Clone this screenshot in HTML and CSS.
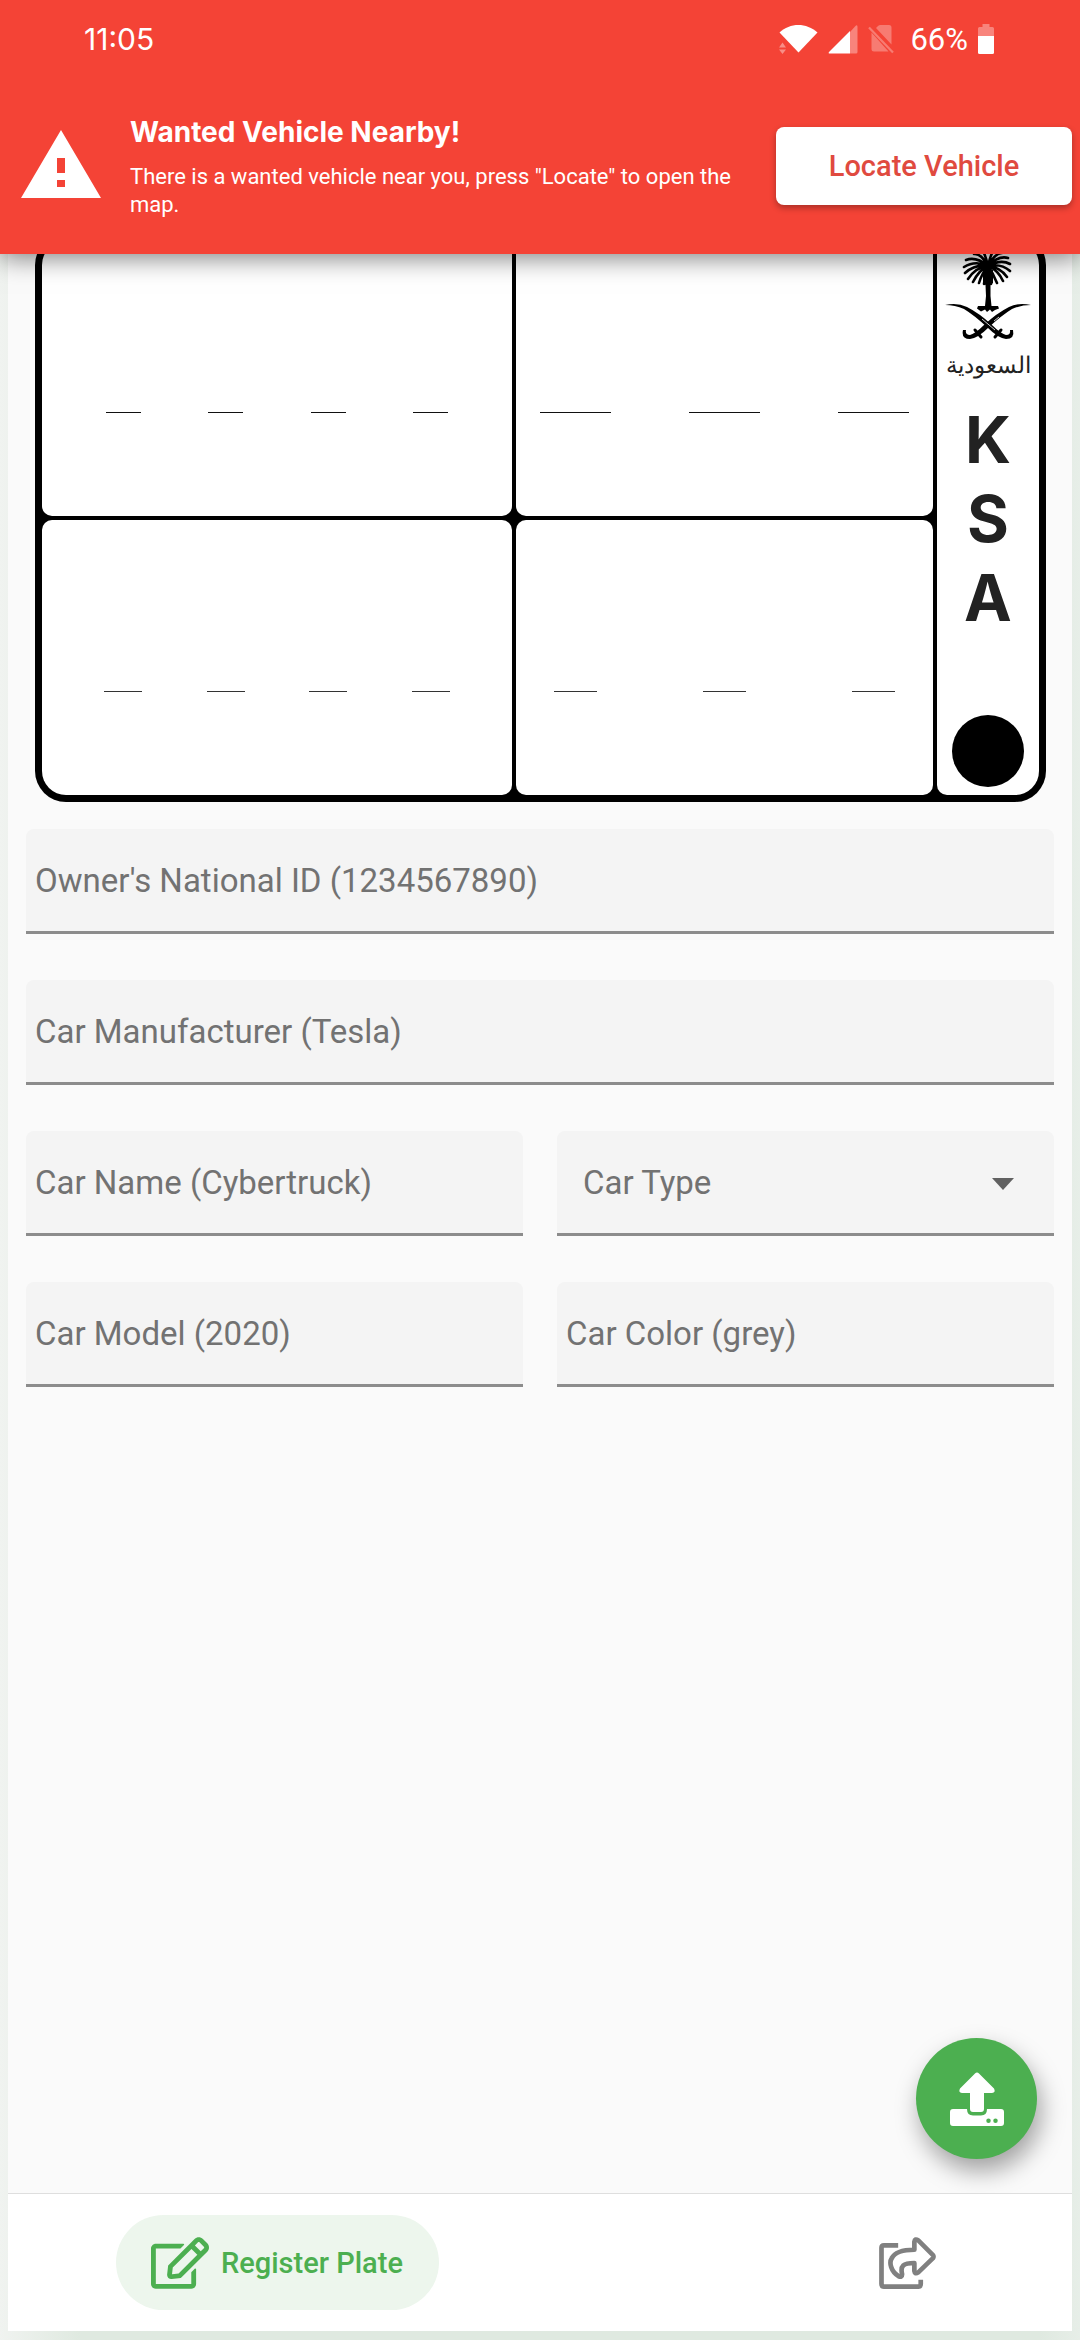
FILE: index.html
```html
<!DOCTYPE html>
<html lang="en">
<head>
<meta charset="utf-8">
<meta name="viewport" content="width=device-width, initial-scale=1">
<title>Register Plate</title>
<link rel="stylesheet" href="styles.css">
</head>
<body class="app">
  <header class="banner">
    <div class="status">
      <span class="status-time">11:05</span>
      <div class="status-icons">
        <svg class="icon-wifi" viewBox="0 0 40 30" aria-hidden="true"><path fill="#fff" d="M1.500 8.500C12-1.500 28.500-1.500 39.500 8.500L20.500 28.500Z"/><path fill="#fff" fill-opacity=".4" d="M1 23.500L4.500 18.500 8 23.500ZM1 25.500H8L4.500 30Z"/></svg>
        <svg class="icon-signal" viewBox="0 0 30 30" aria-hidden="true"><path fill="#fff" fill-opacity=".35" d="M22 8L27 2.500Q29.500 0 29.500 3V28Q29.500 29.500 28 29.500H22Z"/><path fill="#fff" d="M22 7V29.500H2Q-.5 29.500 1.500 27.500Z"/></svg>
        <svg class="icon-sim" viewBox="0 0 26 30" aria-hidden="true"><path fill="#fff" fill-opacity=".3" d="M8 4L10 2Q11 1 12.500 1H21Q23.500 1 23.500 3.500V20.500ZM3.500 8.500L20.500 27.500H6Q3.500 27.500 3.500 25Z"/><path stroke="#fff" stroke-opacity=".3" stroke-width="2.200" d="M1 3.500L25 28.500"/></svg>
        <span class="status-battery-text">66%</span>
        <svg class="icon-battery" viewBox="0 0 16 30" aria-hidden="true"><path fill="#fff" fill-opacity=".35" d="M4.500 0H11.500V3H14.500Q16 3 16 4.500V12H0V4.500Q0 3 1.500 3H4.500Z"/><path fill="#fff" d="M0 12H16V28.500Q16 30 14.500 30H1.500Q0 30 0 28.500Z"/></svg>
      </div>
    </div>
    <div class="alert" role="alert">
      <svg class="alert-icon" viewBox="0 0 80 68" aria-hidden="true"><path fill="#fff" fill-rule="evenodd" d="M40 0L80 68H0ZM36 28V43H44V28ZM36 50V57H44V50Z"/></svg>
      <div class="alert-copy">
        <h1 class="alert-title">Wanted Vehicle Nearby!</h1>
        <p class="alert-text">There is a wanted vehicle near you, press "Locate" to open the map.</p>
      </div>
      <button class="alert-button" type="button">Locate Vehicle</button>
    </div>
  </header>

  <div class="sheet">
    <main class="content">
      <form class="form">
        <div class="plate">
          <div class="plate-cell plate-numbers">
            <input class="slot" aria-label="Arabic digit 1"><input class="slot" aria-label="Arabic digit 2"><input class="slot" aria-label="Arabic digit 3"><input class="slot" aria-label="Arabic digit 4">
          </div>
          <div class="plate-cell plate-letters plate-letters-wide">
            <input class="slot" aria-label="Arabic letter 1"><input class="slot" aria-label="Arabic letter 2"><input class="slot" aria-label="Arabic letter 3">
          </div>
          <div class="plate-cell plate-side">
            <svg class="emblem" viewBox="0 0 86 92" aria-hidden="true">
              <g fill="none" stroke="#000" stroke-width="2.600" stroke-linecap="round">
                <path d="M43 18Q31 8 21 12M43 18Q30 12 19 19M43 18Q30 16 20 25M43 18Q31 19 23 31M43 18Q34 22 28 34M43 18Q37 25 34 35M43 18Q40 27 39 36M43 18Q45 27 46 36M43 18Q48 25 52 35M43 18Q53 22 58 33M43 18Q55 19 62 29M43 18Q56 15 65 23M43 18Q56 11 65 16M43 18Q54 7 63 10M43 18Q50 5 57 5M43 18Q36 5 29 6M43 18Q40 5 37 2M43 18Q46 5 49 2"/>
              </g>
              <path d="M38 22H48V35L45.500 37 45.500 48 46.500 58H53L54 60.500 50 62 47 64 45 61.500 42 64 40 61.500 36 63.500 32 60.500 33 58H40L41 48 40.500 37 38 35Z"/>
              <path d="M0 57Q12 54 22 59 34 65 47 77 55 85 61 87 66 87 65 82L68 82Q70 91 61 91 53 90 43 80 29 67 19 61 10 57 0 57Z"/>
              <path d="M86 57Q74 54 64 59 52 65 39 77 31 85 25 87 20 87 21 82L18 82Q16 91 25 91 33 90 43 80 57 67 67 61 76 57 86 57Z"/>
              <path stroke="#fff" stroke-width=".8" fill="none" d="M37 71L50 82M49 73L54 69"/>
              <path fill="none" stroke="#000" stroke-width="3" stroke-linecap="round" d="M30 82L36 89M56 82L50 89"/>
            </svg>
            <span class="plate-country-ar" lang="ar" dir="rtl">السعودية</span>
            <div class="plate-country"><span>K</span><span>S</span><span>A</span></div>
            <span class="plate-dot"></span>
          </div>
          <div class="plate-cell plate-numbers plate-numbers-latin">
            <input class="slot" aria-label="Digit 1"><input class="slot" aria-label="Digit 2"><input class="slot" aria-label="Digit 3"><input class="slot" aria-label="Digit 4">
          </div>
          <div class="plate-cell plate-letters">
            <input class="slot" aria-label="Letter 1"><input class="slot" aria-label="Letter 2"><input class="slot" aria-label="Letter 3">
          </div>
        </div>

        <input class="field field-full" aria-label="Owner's National ID" placeholder="Owner's National ID (1234567890)">
        <input class="field field-full" aria-label="Car Manufacturer" placeholder="Car Manufacturer (Tesla)">
        <input class="field" aria-label="Car Name" placeholder="Car Name (Cybertruck)">
        <div class="select-wrap">
          <select class="field field-select" aria-label="Car Type"><option>Car Type</option></select>
          <svg class="select-arrow" viewBox="0 0 22 12" aria-hidden="true"><path fill="#616161" d="M0 0H22L11 12Z"/></svg>
        </div>
        <input class="field" aria-label="Car Model" placeholder="Car Model (2020)">
        <input class="field" aria-label="Car Color" placeholder="Car Color (grey)">
      </form>
      <button class="upload" type="button" aria-label="Upload">
        <svg class="upload-icon" viewBox="0 0 54 54" aria-hidden="true"><path fill="#fff" d="M27 .5Q28 .5 29 1.500L44 16.500Q46 20.500 42 21H34V37Q34 40 31 40H23Q20 40 20 37V21H12Q8 20.500 10 16.500L25 1.500Q26 .5 27 .5Z"/><path fill="#fff" fill-rule="evenodd" d="M3 37H17Q17 43.500 23 43.500H31Q37 43.500 37 37H51Q54 37 54 40V51Q54 54 51 54H3Q0 54 0 51V40Q0 37 3 37ZM38.500 46.500A2.200 2.200 0 1 0 38.500 51 2.200 2.200 0 1 0 38.500 46.500ZM45.500 46.500A2.200 2.200 0 1 0 45.500 51 2.200 2.200 0 1 0 45.500 46.500Z"/></svg>
      </button>
    </main>
    <nav class="tabs">
      <a class="tab tab-active" href="#register">
        <svg class="tab-icon" viewBox="0 0 576 512" aria-hidden="true"><path fill="currentColor" d="M402.300 344.900l32-32c5-5 13.700-1.500 13.700 5.700V464c0 26.500-21.500 48-48 48H48c-26.500 0-48-21.500-48-48V112c0-26.500 21.500-48 48-48h273.500c7.100 0 10.700 8.600 5.700 13.700l-32 32c-1.500 1.500-3.500 2.300-5.700 2.300H48v352h352V350.500c0-2.100.8-4.100 2.300-5.600zm156.600-201.800L296.300 405.700l-90.400 10c-26.200 2.900-48.500-19.200-45.600-45.600l10-90.400L432.900 17.100c22.900-22.900 59.900-22.900 82.700 0l43.200 43.200c22.900 22.900 22.900 60 .1 82.800zM460.100 174L402 115.900 216.200 301.800l-7.300 65.300 65.300-7.300L460.100 174zm64.800-79.700l-43.200-43.200c-4.100-4.100-10.800-4.100-14.800 0L436 82l58.100 58.100 30.900-30.900c4-4.200 4-10.800-.1-14.900z"/></svg>
        <span>Register Plate</span>
      </a>
      <a class="tab tab-share" href="#share" aria-label="Share">
        <svg class="tab-icon" viewBox="0 0 58 53" aria-hidden="true"><g fill="none" stroke="currentColor" stroke-width="4.800" stroke-linejoin="round"><path d="M20 8.500H5.500Q3 8.500 3 11V48Q3 50.500 5.500 50.500H40.500Q43 50.500 43 48V43.500"/><path d="M36.500 13V5Q37 1 40.500 3.500L55.500 18.500Q56.500 20 55.500 21.500L40.500 36Q37 38.500 36.500 34.500V26.500C25 26.500 22 29.500 24 38Q24 41.500 20.500 40C12.500 35 10.500 26 13.500 21.500C17 14.500 26 13 36.500 13Z"/></g></svg>
      </a>
    </nav>
  </div>
</body>
</html>
```
FILE: styles.css
```css
* {
  box-sizing: border-box;
}

.app {
  margin: 0;
  min-height: 100vh;
  display: flex;
  flex-direction: column;
  font-family: Roboto, "Noto Sans", sans-serif;
  color: #222;
  background: linear-gradient(to right, #f0f3f0, #dfe9e0 80px, #dfe9e0 calc(100% - 40px), #e7eee8);
}

/* Alert banner, drawn over the top of the sheet */
.banner {
  position: relative;
  z-index: 1;
  background: #f44336;
  color: #fff;
  box-shadow: 0 4px 24px rgba(0, 0, 0, 0.5);
}

.status {
  display: flex;
  justify-content: space-between;
  align-items: center;
  height: 78px;
  padding: 0 86px 0 84px;
  font-size: 31px;
}

.status-time {
  font-family: Inter, sans-serif;
  font-size: 30px;
}

.status-icons {
  display: flex;
  align-items: center;
  gap: 10px;
}

.icon-wifi {
  width: 40px;
  height: 30px;
}

.icon-signal {
  width: 30px;
  height: 30px;
}

.icon-sim {
  width: 26px;
  height: 30px;
}

.status-battery-text {
  margin-left: 6px;
}

.icon-battery {
  width: 16px;
  height: 30px;
}

.alert {
  display: flex;
  align-items: center;
  padding: 0 8px 0 21px;
}

.alert-icon {
  width: 80px;
  height: 68px;
  flex: none;
  margin-bottom: 4px;
}

.alert-copy {
  flex: 1;
  padding: 34px 16px 35px 29px;
}

.alert-title {
  margin: 0;
  font: 700 28px/40px Inter, sans-serif;
}

.alert-text {
  margin: 11px 0 0;
  font-size: 22px;
  line-height: 28px;
}

.alert-button {
  flex: none;
  width: 296px;
  height: 78px;
  border: 0;
  border-radius: 8px;
  background: #fff;
  color: #e04a3f;
  font: 500 29px Roboto, sans-serif;
  box-shadow: 0 3px 6px rgba(0, 0, 0, 0.3);
}

.sheet {
  flex: 1;
  display: flex;
  flex-direction: column;
  margin: -20px 8px 9px;
  background: #fafafa;
}

.content {
  flex: 1;
  display: flex;
  flex-direction: column;
  justify-content: space-between;
}

.form {
  display: grid;
  grid-template-columns: 1fr 1fr;
  gap: 46px 34px;
  padding: 0 18px;
}

/* Licence plate */
.plate {
  grid-column: 1 / -1;
  display: grid;
  grid-template-columns: 470fr 417fr 102fr;
  grid-template-rows: 275px 275px;
  gap: 4px;
  margin: 0 8px -19px 9px;
  padding: 7px;
  border-radius: 31px;
  background: #000;
}

.plate-cell {
  display: flex;
  align-items: flex-start;
  justify-content: space-between;
  border-radius: 10px;
  background: #fff;
}

.plate-numbers {
  padding: 112px 64px 0;
  border-top-left-radius: 24px;
}

.plate-numbers-latin {
  padding: 112px 62px 0;
  border-radius: 10px 10px 10px 24px;
}

.plate-letters {
  padding: 112px 38px 0;
}

.plate-letters-wide {
  padding: 112px 24px 0;
}

.plate-side {
  grid-column: 3;
  grid-row: 1 / 3;
  flex-direction: column;
  align-items: center;
  justify-content: flex-start;
  padding: 7px 0 8px;
  border-radius: 10px 24px 24px 10px;
}

.slot {
  width: 35px;
  height: 60px;
  padding: 0;
  border: 0;
  border-bottom: 1px solid #111;
  border-radius: 0;
  background: none;
  text-align: center;
  font: 40px Roboto, sans-serif;
}

.plate-numbers-latin .slot {
  width: 38px;
  border-color: #333;
}

.plate-letters .slot {
  width: 43px;
  border-color: #333;
}

.plate-letters-wide .slot {
  width: 71px;
  border-color: #111;
}

.emblem {
  width: 86px;
  height: 92px;
}

.plate-country-ar {
  font-size: 23px;
  line-height: 52px;
  font-weight: 500;
}

.plate-country {
  display: flex;
  flex-direction: column;
  align-items: center;
  margin-top: 8px;
  font: 700 64px/79px Inter, sans-serif;
}

.plate-dot {
  width: 72px;
  height: 72px;
  margin-top: auto;
  border-radius: 50%;
  background: #000;
}

/* Text fields */
.field {
  width: 100%;
  height: 105px;
  margin: 0;
  padding: 0 9px;
  border: 0;
  border-bottom: 3px solid #8c8c8c;
  border-radius: 8px 8px 0 0;
  background: #f4f4f4;
  color: #727272;
  font: 33px Roboto, sans-serif;
}

.field::placeholder {
  color: #727272;
  opacity: 1;
}

.field-full {
  grid-column: 1 / -1;
}

.select-wrap {
  display: grid;
  align-items: center;
}

.field-select {
  grid-area: 1 / 1;
  appearance: none;
  padding-left: 26px;
}

.select-arrow {
  grid-area: 1 / 1;
  justify-self: end;
  width: 22px;
  height: 12px;
  margin-right: 40px;
  pointer-events: none;
}

.upload {
  align-self: flex-end;
  display: grid;
  place-items: center;
  width: 121px;
  height: 121px;
  margin: 0 35px 34px;
  padding: 0;
  border: 0;
  border-radius: 50%;
  background: #4caf50;
  box-shadow: 4px 12px 24px rgba(0, 0, 0, 0.36);
}

.upload-icon {
  width: 54px;
  height: 54px;
}

/* Bottom tabs */
.tabs {
  display: flex;
  align-items: center;
  justify-content: space-between;
  height: 138px;
  padding: 0 108px;
  border-top: 1px solid #dedede;
  background: #fff;
}

.tab {
  display: flex;
  align-items: center;
  gap: 12px;
  height: 95px;
  color: #808080;
  font-size: 29px;
  font-weight: 500;
  text-decoration: none;
}

.tab-active {
  padding: 0 36px 0 35px;
  border-radius: 48px;
  background: #edf6ed;
  color: #4caf50;
}

.tab-icon {
  width: 58px;
  height: 52px;
}

.tab-share {
  padding-right: 28px;
}
```
